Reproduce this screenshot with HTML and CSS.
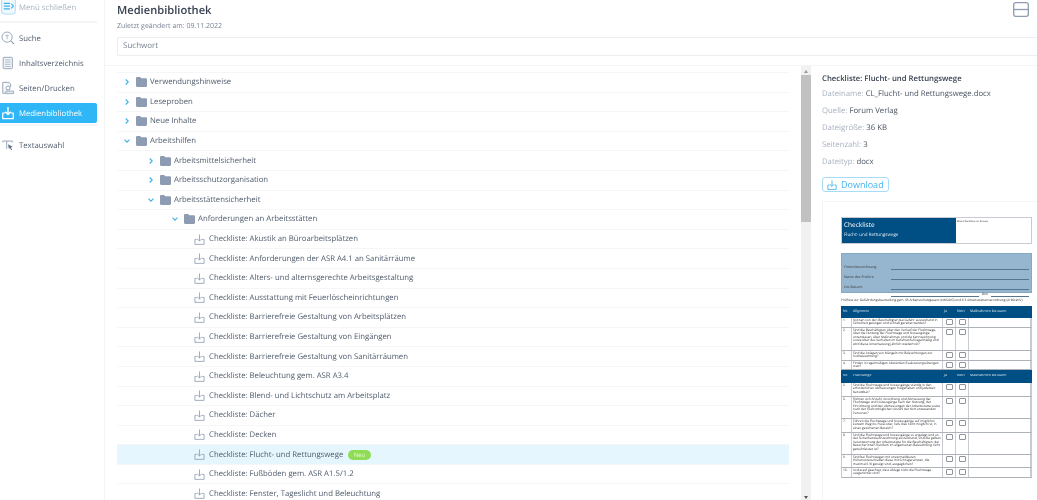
FILE: index.html
```html
<!DOCTYPE html>
<html lang="de">
<head>
<meta charset="utf-8">
<title>Medienbibliothek</title>
<link rel="stylesheet" href="styles.css">
</head>
<body>
<svg class="defs" width="0" height="0" aria-hidden="true">
  <symbol id="folder" viewBox="0 0 11 10"><path d="M0 1.2C0 .5.5 0 1.2 0h2.6c.4 0 .7.2.9.5l.5.8h4.6c.7 0 1.2.5 1.2 1.2v6.3c0 .7-.5 1.2-1.2 1.2H1.2C.5 10 0 9.500 0 8.800z" fill="#8d9cb2"/></symbol>
  <symbol id="right" viewBox="0 0 8 8"><path d="M2.700 1.500l2.500 2.500-2.500 2.500" fill="none" stroke="#3fb0ea" stroke-width="1.100"/></symbol>
  <symbol id="down" viewBox="0 0 8 8"><path d="M1.500 2.700l2.500 2.500 2.500-2.500" fill="none" stroke="#3fb0ea" stroke-width="1.100"/></symbol>
  <symbol id="dl" viewBox="0 0 12 12"><path d="M6 .5v7M3.500 5.200L6 7.700l2.500-2.500M3 6H1v5.300h10V6H9" fill="none" stroke="#8e9bb0" stroke-width=".9"/></symbol>
</svg>
<div class="app">
  <nav class="sidebar">
    <div class="menu-close">
      <svg class="menu-icon" viewBox="0 0 16 16"><rect x=".7" y="-4" width="14.600" height="19" rx="3" fill="#eef8fe" stroke="#a9dcf8"/><path d="M3 3.500h6.500M3 6.500h6.500M3 9.500h6.500" stroke="#3fb0ea" stroke-width="1.400"/><path d="M11 4l2.200 2.500L11 9" fill="none" stroke="#3fb0ea" stroke-width="1.200"/></svg>
      <span>Menü schließen</span>
    </div>
    <a class="nav-item first">
      <svg class="nav-icon" viewBox="0 0 16 16"><circle cx="7" cy="7" r="5.800" fill="none" stroke="#8e9bb0"/><path d="M11.200 11.200l3.800 3.800" stroke="#8e9bb0" stroke-width="1.200"/><path d="M5 5h4M7 5v4.500" stroke="#8e9bb0" stroke-width=".8"/></svg>
      <span>Suche</span>
    </a>
    <a class="nav-item">
      <svg class="nav-icon" viewBox="0 0 16 16"><rect x="2.500" y="1.500" width="10.500" height="13" rx="1" fill="#f2f4f7" stroke="#8e9bb0"/><path d="M4.500 4.500h6.500M4.500 7h6.500M4.500 9.500h6.500M4.500 12h6.500" stroke="#8e9bb0" stroke-width=".7"/></svg>
      <span>Inhaltsverzeichnis</span>
    </a>
    <a class="nav-item">
      <svg class="nav-icon" viewBox="0 0 16 16"><path d="M2 1.500h7l2 2v3.500M2 1.500v12.500h4" fill="#f2f4f7" stroke="#8e9bb0"/><circle cx="8" cy="8" r="2.300" fill="none" stroke="#8e9bb0"/><path d="M5.500 14.500v-3h9v3zM7 11V9.500M10 11V9.500" fill="#e0e5ec" stroke="#8e9bb0" stroke-width=".8"/></svg>
      <span>Seiten/Drucken</span>
    </a>
    <a class="nav-item active">
      <svg class="nav-icon" viewBox="0 0 16 16"><path d="M8 1v8.500M4.800 6.500L8 9.700l3.200-3.200" fill="none" stroke="#fff" stroke-width="1.600"/><path d="M5 8H2v6.500h12V8h-3" fill="none" stroke="#fff" stroke-width="1.400"/></svg>
      <span>Medienbibliothek</span>
    </a>
    <a class="nav-item last">
      <svg class="nav-icon" viewBox="0 0 16 16"><path d="M2 3.500h11M2 3.500v1.500M13 3.500v1.500M6.500 3.500v9" fill="none" stroke="#8e9bb0"/><path d="M8 7l5.500 3-2.300.8 1.500 2.700-1 .5-1.500-2.700L9 12.500z" fill="#66758c"/></svg>
      <span>Textauswahl</span>
    </a>
  </nav>
  <main class="main">
    <header class="head">
      <h1>Medienbibliothek</h1>
      <p class="changed">Zuletzt geändert am: 09.11.2022</p>
      <div class="search">Suchwort</div>
      <svg class="layout-icon" viewBox="0 0 16 15"><rect x=".7" y=".7" width="14.600" height="13.600" rx="2" fill="none" stroke="#8e9bb0" stroke-width="1.300"/><path d="M1 7.500h14" stroke="#8e9bb0" stroke-width="1.300"/></svg>
    </header>
    <div class="content">
      <section class="tree-wrap">
        <ul class="tree">
          <li class="row l0"><svg class="chev"><use href="#right"/></svg><svg class="fold"><use href="#folder"/></svg>Verwendungshinweise</li>
          <li class="row l0"><svg class="chev"><use href="#right"/></svg><svg class="fold"><use href="#folder"/></svg>Leseproben</li>
          <li class="row l0"><svg class="chev"><use href="#right"/></svg><svg class="fold"><use href="#folder"/></svg>Neue Inhalte</li>
          <li class="row l0"><svg class="chev"><use href="#down"/></svg><svg class="fold"><use href="#folder"/></svg>Arbeitshilfen</li>
          <li class="row l1"><svg class="chev"><use href="#right"/></svg><svg class="fold"><use href="#folder"/></svg>Arbeitsmittelsicherheit</li>
          <li class="row l1"><svg class="chev"><use href="#right"/></svg><svg class="fold"><use href="#folder"/></svg>Arbeitsschutzorganisation</li>
          <li class="row l1"><svg class="chev"><use href="#down"/></svg><svg class="fold"><use href="#folder"/></svg>Arbeitsstättensicherheit</li>
          <li class="row l2"><svg class="chev"><use href="#down"/></svg><svg class="fold"><use href="#folder"/></svg>Anforderungen an Arbeitsstätten</li>
          <li class="row leaf"><svg class="dl"><use href="#dl"/></svg>Checkliste: Akustik an Büroarbeitsplätzen</li>
          <li class="row leaf"><svg class="dl"><use href="#dl"/></svg>Checkliste: Anforderungen der ASR A4.1 an Sanitärräume</li>
          <li class="row leaf"><svg class="dl"><use href="#dl"/></svg>Checkliste: Alters- und alternsgerechte Arbeitsgestaltung</li>
          <li class="row leaf"><svg class="dl"><use href="#dl"/></svg>Checkliste: Ausstattung mit Feuerlöscheinrichtungen</li>
          <li class="row leaf"><svg class="dl"><use href="#dl"/></svg>Checkliste: Barrierefreie Gestaltung von Arbeitsplätzen</li>
          <li class="row leaf"><svg class="dl"><use href="#dl"/></svg>Checkliste: Barrierefreie Gestaltung von Eingängen</li>
          <li class="row leaf"><svg class="dl"><use href="#dl"/></svg>Checkliste: Barrierefreie Gestaltung von Sanitärräumen</li>
          <li class="row leaf"><svg class="dl"><use href="#dl"/></svg>Checkliste: Beleuchtung gem. ASR A3.4</li>
          <li class="row leaf"><svg class="dl"><use href="#dl"/></svg>Checkliste: Blend- und Lichtschutz am Arbeitsplatz</li>
          <li class="row leaf"><svg class="dl"><use href="#dl"/></svg>Checkliste: Dächer</li>
          <li class="row leaf"><svg class="dl"><use href="#dl"/></svg>Checkliste: Decken</li>
          <li class="row leaf selected"><svg class="dl"><use href="#dl"/></svg>Checkliste: Flucht- und Rettungswege<span class="badge">Neu</span></li>
          <li class="row leaf"><svg class="dl"><use href="#dl"/></svg>Checkliste: Fußböden gem. ASR A1.5/1.2</li>
          <li class="row leaf"><svg class="dl"><use href="#dl"/></svg>Checkliste: Fenster, Tageslicht und Beleuchtung</li>
        </ul>
      </section>
      <div class="scrollbar">
        <span class="arrow up"></span>
        <span class="thumb"></span>
        <span class="arrow dn"></span>
      </div>
      <aside class="detail">
        <h2>Checkliste: Flucht- und Rettungswege</h2>
        <p class="meta"><span>Dateiname:</span> CL_Flucht- und Rettungswege.docx</p>
        <p class="meta"><span>Quelle:</span> Forum Verlag</p>
        <p class="meta"><span>Dateigröße:</span> 36 KB</p>
        <p class="meta"><span>Seitenzahl:</span> 3</p>
        <p class="meta"><span>Dateityp:</span> docx</p>
        <button class="download"><svg viewBox="0 0 12 12"><path d="M6 .5v7M3.500 5.200L6 7.700l2.500-2.500M3 6H1v5.300h10V6H9" fill="none" stroke="#3fb0ea"/></svg>Download</button>
        <div class="preview">
          <div class="doc">
            <div class="doc-head">
              <div class="doc-title"><b>Checkliste</b><span>Flucht- und Rettungswege</span></div>
              <div class="doc-note">Bitte Checkliste vor Einsatz</div>
            </div>
            <div class="doc-form">
              <div class="form-row"><span>Firmenbezeichnung:</span><i></i></div>
              <div class="form-row"><span>Name des Prüfers:</span><i></i></div>
              <div class="form-row"><span>Ort/Datum:</span><i></i></div>
              <div class="form-date"><i></i><span>den</span><i></i></div>
            </div>
            <p class="doc-line">Prüfliste zur Gefährdungsbeurteilung gem. §5 Arbeitsschutzgesetz (ArbSchG) und § 3 Arbeitsstättenverordnung (ArbStättV)</p>
            <div class="t thead"><span>Nr.</span><span>Allgemein</span><span>Ja</span><span>Nein</span><span>Maßnahmen bis wann</span></div>
            <div class="t h10"><span>1.</span><span>Können von den Beschäftigten bei Gefahr ausreichend in Sicherheit gelangen und schnell gerettet werden?</span><em></em><em></em><span></span></div>
            <div class="t h23"><span>2.</span><span>Sind die Beschäftigten über den Verlauf der Fluchtwege, über die Nutzung der Fluchtwege und Notausgänge unterwiesen, über Maßnahmen und die Kennzeichnung sowie über das Verhalten im Gefahrenfall regelmäßig und wird diese Unterweisung jährlich wiederholt?</span><em></em><em></em><span></span></div>
            <div class="t h10"><span>3.</span><span>Sind die Anlagen von Mängeln mit Beleuchtungen zur Notbeleuchtung?</span><em></em><em></em><span></span></div>
            <div class="t h9"><span>4.</span><span>Finden in regelmäßigen Abständen Evakuierungsübungen statt?</span><em></em><em></em><span></span></div>
            <div class="t thead tall"><span>Nr.</span><span>Fluchtwege</span><span>Ja</span><span>Nein</span><span>Maßnahmen bis wann</span></div>
            <div class="t h14"><span>5.</span><span>Sind die Fluchtwege und Notausgänge ständig in den erforderlichen Abmessungen freigehalten und jederzeit benutzbar?</span><em></em><em></em><span></span></div>
            <div class="t h22"><span>6.</span><span>Richten sich Anzahl, Anordnung und Abmessung der Fluchtwege und Notausgänge nach der Nutzung, der Einrichtung und den Abmessungen der Arbeitsstätte sowie nach der höchstmöglichen Anzahl der dort anwesenden Personen?</span><em></em><em></em><span></span></div>
            <div class="t h14"><span>7.</span><span>Führen die Fluchtwege und Notausgänge auf möglichst kurzem Weg ins Freie oder, falls dies nicht möglich ist, in einen gesicherten Bereich?</span><em></em><em></em><span></span></div>
            <div class="t h22"><span>8.</span><span>Sind die Fluchtwege und Notausgänge so angelegt und an der Sicherheitskennzeichnung ausreichend, sind die gelben Verantwortung der Arbeitsstätte für die Beschäftigten, der Besucherinnen Rundum im allgemeinen Beleuchtung nicht gewährleistet ist?</span><em></em><em></em><span></span></div>
            <div class="t h13"><span>9.</span><span>Sind bei Fluchtwegen mit unvermeidbaren Höhenunterschieden diese mit Schrägerampen, die maximal 6 % geneigt sind, ausgeglichen?</span><em></em><em></em><span></span></div>
            <div class="t h10"><span>10.</span><span>Ist darauf geachtet, dass Ablage nicht die Fluchtwege ausgerichtet sind?</span><em></em><em></em><span></span></div>
          </div>
        </div>
      </aside>
    </div>
  </main>
</div>
</body>
</html>
```
FILE: styles.css
```css
* { box-sizing: border-box; margin: 0; padding: 0; }
html, body { height: 500px; overflow: hidden; background: #fff; }
body { font-family: "Open Sans", sans-serif; font-size: 7.750px; color: #4b5563; text-rendering: geometricPrecision; }
.defs { position: absolute; }

.app { display: flex; height: 500px; filter: blur(.4px); }

/* Sidebar */
.sidebar { width: 105px; flex: none; border-right: 1px solid #f3f4f6; padding-right: 7px; }
.menu-close { display: flex; align-items: center; gap: 3px; height: 15px; color: #aab2bf; padding-left: 1px; }
.menu-icon { width: 15px; height: 15px; flex: none; }
.nav-item { display: flex; align-items: center; gap: 4px; height: 20px; margin-bottom: 5px; padding-left: 1px; color: #4f5b6b; }
.nav-item span { padding-top: 2px; }
.nav-item.first { margin-top: 13px; position: relative; }
.nav-icon { width: 14px; height: 14px; flex: none; }
.nav-item.active { background: #2fb6f6; color: #fff; border-radius: 0 2px 2px 0; }
.nav-item.last { margin-top: 12px; position: relative; }
.nav-item.first::before { content: ""; position: absolute; left: 0; right: 0; top: -7px; height: 2px; background: #f4f5f7; }
.nav-item.last::before { content: ""; position: absolute; left: 0; right: 0; top: -11px; height: 2px; background: #f4f5f7; }

/* Main */
.main { flex: 1; min-width: 0; display: flex; flex-direction: column; }
.head { height: 66px; flex: none; border-bottom: 1px solid #f3f4f6; padding: 3px 0 0 12px; position: relative; }
h1 { font-size: 11.150px; font-weight: 600; line-height: 16px; color: #374151; }
.changed { font-size: 7px; line-height: 11px; margin-top: 2px; color: #7a8494; }
.search { margin-top: 5px; height: 19px; border: 1px solid #eceef1; border-right: 0; border-radius: 2px 0 0 2px; padding-left: 5px; font-size: 8px; line-height: 16px; color: #7a8494; }
.layout-icon { position: absolute; right: 8px; top: 2px; width: 16px; height: 15px; }

.content { flex: 1; min-height: 0; display: flex; }
.tree-wrap { width: 696px; flex: none; padding: 6px 12px 0; overflow: hidden; }
.tree { list-style: none; border-top: 1px solid #f5f6f8; }
.row { display: flex; align-items: center; height: 19.6px; border-bottom: 1px solid #f5f6f8; color: #4f5b6b; white-space: nowrap; }
.chev { width: 8px; height: 8px; flex: none; margin-right: 5px; }
.fold { width: 11px; height: 10px; flex: none; margin-right: 3px; }
.dl { width: 11px; height: 11px; flex: none; margin-right: 4px; }
.l0 { padding-left: 6px; }
.l1 { padding-left: 30px; }
.l2 { padding-left: 54px; }
.leaf { padding-left: 77px; }
.selected { background: #e6f6fe; }
.badge { margin-left: 5px; height: 10px; line-height: 10px; padding: 0 5.500px; border-radius: 6px; background: #8fdc55; color: #e8f9d8; font-size: 6px; }

.scrollbar { width: 10px; flex: none; background: #f1f1f1; display: flex; flex-direction: column; align-items: center; }
.thumb { width: 100%; height: 147px; background: #c1c1c1; }
.arrow { width: 0; height: 0; border-left: 2px solid transparent; border-right: 2px solid transparent; }
.arrow.up { border-bottom: 3px solid #9a9a9a; margin: 4px 0 2px; }
.arrow.dn { border-top: 3px solid #555; margin-top: auto; margin-bottom: 1px; }

.detail { flex: 1; min-width: 0; padding: 7px 0 0 11px; overflow: hidden; }
h2 { font-size: 7.750px; font-weight: 600; line-height: 12px; color: #374151; }
.meta { line-height: 17px; font-size: 7.750px; color: #4b5563; }
.meta:first-of-type { margin-top: 1px; }
.meta span { color: #a9b1c0; }
.download { display: flex; align-items: center; gap: 4px; height: 15px; width: 67px; margin-top: 6px; padding-left: 4px; border: 1px solid #a5dcf8; border-radius: 3px; background: #fff; color: #45b4ee; font: 9px "Open Sans", sans-serif; }
.download svg { width: 10px; height: 10px; }

/* Preview of the document */
.preview { margin-top: 9px; border: 1px solid #f3f4f6; border-right: 0; border-bottom: 0; height: 300px; padding: 15px 5px 0 18px; }
.doc { color: #333; font-size: 3.200px; line-height: 3.600px; }
.doc-head { display: flex; height: 27px; border: 1px solid #c8ccd2; }
.doc-title { width: 114px; background: #004f84; color: #dce9f2; padding: 3px 2px; display: flex; flex-direction: column; gap: 3px; }
.doc-title b { font-size: 6.500px; line-height: 8px; font-weight: 400; color: #fff; }
.doc-title span { font-size: 4.500px; line-height: 6px; }
.doc-note { flex: 1; padding: 2px 1px; font-size: 2.500px; }
.doc-form { margin-top: 9px; height: 40px; background: #96b6cf; border: 1px solid #86a9c4; padding: 6px 2px 0; font-size: 3.500px; }
.form-row { display: flex; height: 10px; align-items: flex-end; }
.form-row span { width: 47px; }
.form-row i { flex: 1; border-bottom: 1px solid #54778f; }
.form-date { display: flex; gap: 3px; margin: 1px 0 0 47px; align-items: flex-end; height: 6px; }
.form-date i:first-child { flex: 1; }
.form-date i { width: 38px; border-bottom: 1px solid #54778f; }
.doc-line { margin: 5px 0 4px; font-size: 3.200px; line-height: 4px; white-space: nowrap; overflow: hidden; }
.t { display: grid; grid-template-columns: 10px 91px 13px 13px 1fr; border-bottom: 1px solid #aeb3b9; border-left: 1px solid #c8ccd2; border-right: 1px solid #c8ccd2; overflow: hidden; }
.t > * { padding: .5px 1px; border-right: 1px solid #c8ccd2; overflow: hidden; font-style: normal; }
.t > em { position: relative; }
.t > em::before { content: ""; position: absolute; left: 3px; top: 1px; width: 5px; height: 4px; border: 1px solid #8f959b; border-radius: 1px; }
.thead { height: 12px; background: #004f84; color: #e3edf4; align-items: center; font-size: 3.500px; border-color: #004f84; }
.thead > * { border-color: #004f84; }
.tall { height: 13px; }
.h9 { height: 9px; }
.h10 { height: 10px; }
.h13 { height: 13px; }
.h14 { height: 14px; }
.h22 { height: 22px; }
.h23 { height: 23px; }
```
